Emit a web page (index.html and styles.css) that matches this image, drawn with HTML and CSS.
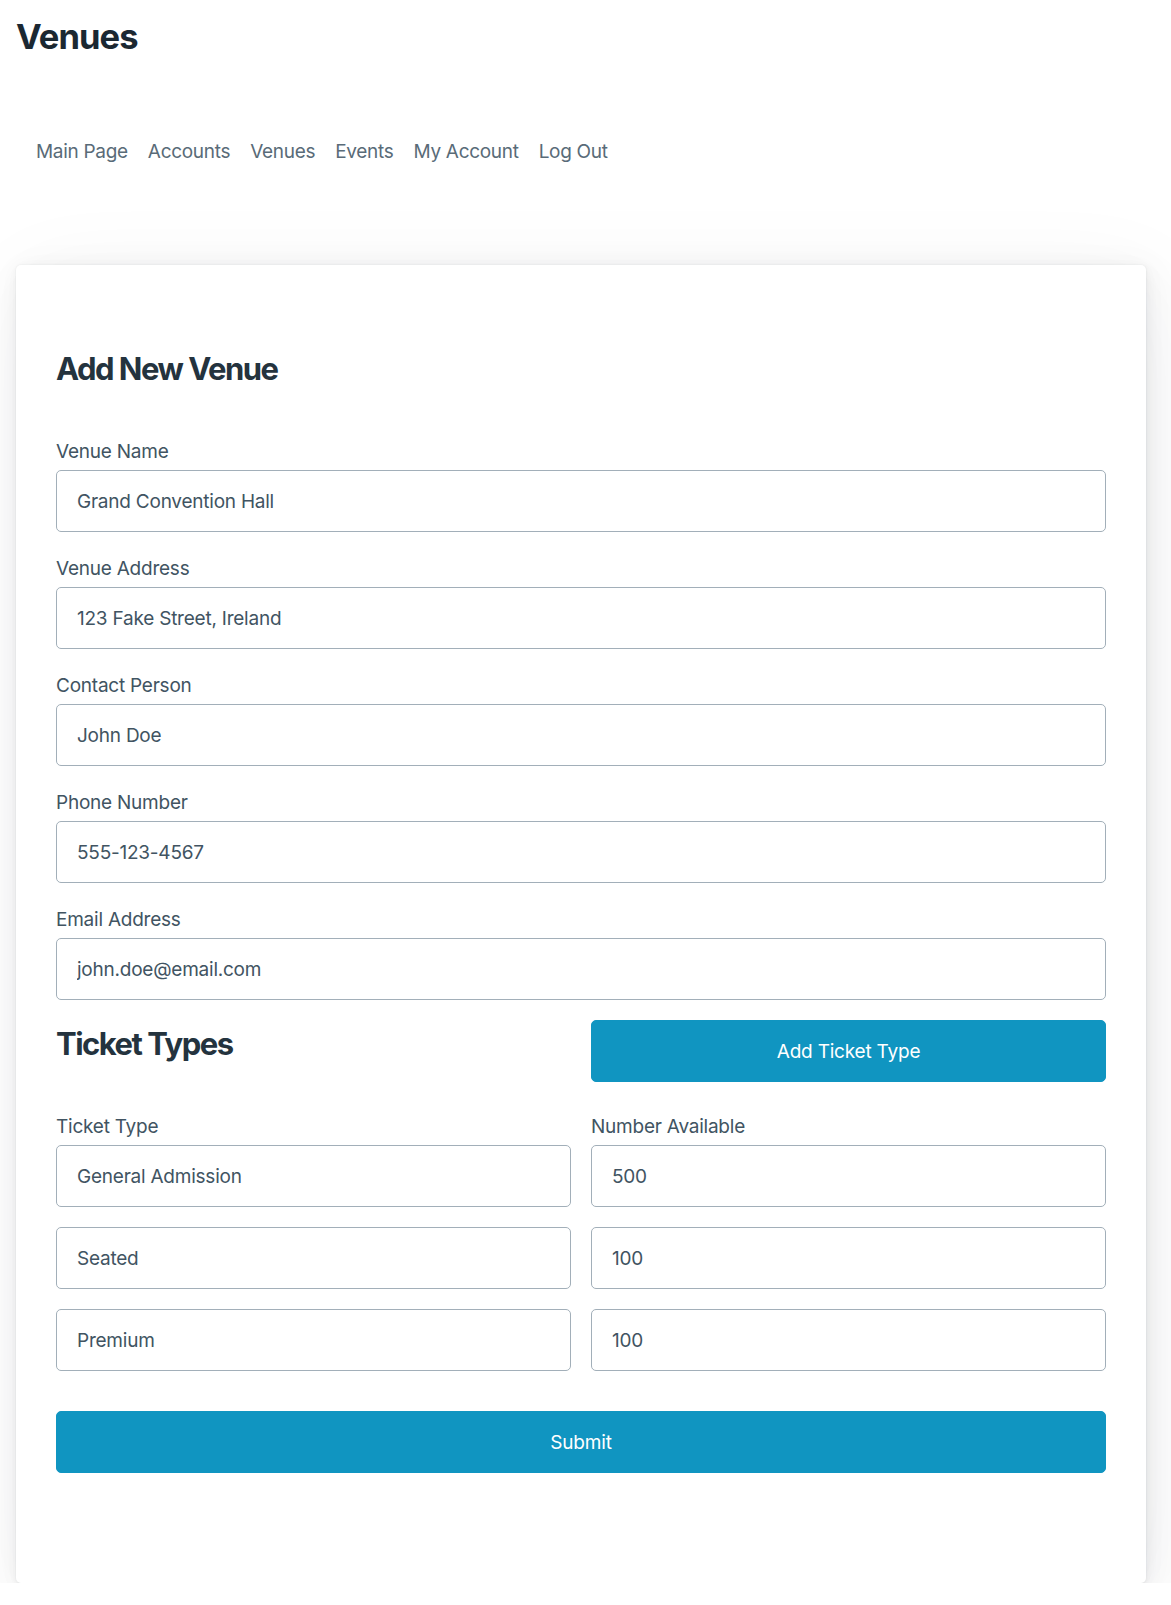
FILE: index.html
```html
<!DOCTYPE html>
<html lang="en">
<head>
<meta charset="utf-8">
<title>Venues</title>
<link rel="stylesheet" href="styles.css">
</head>
<body>
<header class="site-header">
  <h1 class="site-title">Venues</h1>
  <nav class="site-nav">
    <a href="#">Main Page</a>
    <a href="#">Accounts</a>
    <a href="#">Venues</a>
    <a href="#">Events</a>
    <a href="#">My Account</a>
    <a href="#">Log Out</a>
  </nav>
</header>
<main class="main">
  <article class="card">
    <h2 class="card-title">Add New Venue</h2>
    <form class="form">
      <label class="label">Venue Name</label>
      <input class="input" type="text" value="Grand Convention Hall">
      <label class="label">Venue Address</label>
      <input class="input" type="text" value="123 Fake Street, Ireland">
      <label class="label">Contact Person</label>
      <input class="input" type="text" value="John Doe">
      <label class="label">Phone Number</label>
      <input class="input" type="text" value="555-123-4567">
      <label class="label">Email Address</label>
      <input class="input" type="text" value="john.doe@email.com">

      <div class="ticket-head">
        <h2 class="section-title">Ticket Types</h2>
        <button type="button" class="btn">Add Ticket Type</button>
      </div>

      <div class="ticket-grid">
        <label class="label">Ticket Type</label>
        <label class="label">Number Available</label>
        <input class="input" type="text" value="General Admission">
        <input class="input" type="text" value="500">
        <input class="input" type="text" value="Seated">
        <input class="input" type="text" value="100">
        <input class="input" type="text" value="Premium">
        <input class="input" type="text" value="100">
      </div>

      <button type="button" class="btn btn-full">Submit</button>
    </form>
  </article>
</main>
</body>
</html>
```
FILE: styles.css
```css
* { box-sizing: border-box; }
html, body { margin: 0; padding: 0; background: #fff; }
body {
  font-family: Inter, "Noto Sans", "Liberation Sans", sans-serif;
  font-size: 19px;
  line-height: 30px;
  letter-spacing: -0.23px;
  color: #415462;
}
.site-header {
  padding: 18px 16px 0 16px;
}
.site-title {
  margin: 0;
  font-size: 34.5px;
  line-height: 1.125;
  font-weight: 700;
  color: #1b2832;
  letter-spacing: -0.9px;
}
.site-nav {
  display: flex;
  gap: 20px;
  padding: 80px 0 0 20px;
}
.site-nav a {
  color: #596b78;
  text-decoration: none;
  font-size: 19px;
  line-height: 30px;
  letter-spacing: -0.3px;
}
.main {
  padding: 98px 0 0 16px;
}
.card {
  width: 1130px;
  background: #fff;
  border-radius: 5px;
  padding: 43px 40px 110px 40px;
  box-shadow:
    0.0145rem 0.029rem 0.174rem rgba(27, 40, 50, 0.017),
    0.0335rem 0.067rem 0.402rem rgba(27, 40, 50, 0.024),
    0.0625rem 0.125rem 0.75rem rgba(27, 40, 50, 0.03),
    0.1125rem 0.225rem 1.35rem rgba(27, 40, 50, 0.036),
    0.2085rem 0.417rem 2.502rem rgba(27, 40, 50, 0.043),
    0.5rem 1rem 6rem rgba(27, 40, 50, 0.06),
    0 0 0 0.0625rem rgba(27, 40, 50, 0.015);
}
.card-title, .section-title {
  font-size: 31px;
  line-height: 1.125;
  font-weight: 700;
  color: #24333e;
  letter-spacing: -1.5px;
}
.card-title {
  margin: 44px 0 0 0;
}
.form {
  display: flex;
  flex-direction: column;
  margin-top: 48px;
}
.label {
  display: block;
  font-size: 19px;
  line-height: 30px;
  padding-top: 2px;
  margin-bottom: 3px;
  color: #415462;
}
.input {
  display: block;
  width: 100%;
  height: 62px;
  margin: 0 0 20px 0;
  padding: 16px 20px 14px 20px;
  border: 1px solid #a2afb9;
  border-radius: 5px;
  background: #fff;
  font-family: inherit;
  font-size: 19px;
  line-height: 30px;
  letter-spacing: -0.23px;
  color: #415462;
  outline: none;
}
.ticket-head {
  display: grid;
  grid-template-columns: 1fr 1fr;
  column-gap: 20px;
  align-items: start;
  margin: 0 0 28px 0;
}
.section-title {
  margin: 7px 0 0 0;
}
.btn {
  display: block;
  width: 100%;
  height: 62px;
  padding: 16px 20px 14px 20px;
  border: 1px solid #1095c1;
  border-radius: 5px;
  background: #1095c1;
  color: #fff;
  font-family: inherit;
  font-size: 19px;
  line-height: 30px;
  letter-spacing: -0.2px;
  font-weight: 400;
  text-align: center;
  cursor: pointer;
}
.ticket-grid {
  display: grid;
  grid-template-columns: 1fr 1fr;
  column-gap: 20px;
}
.btn-full {
  margin-top: 20px;
}
```
